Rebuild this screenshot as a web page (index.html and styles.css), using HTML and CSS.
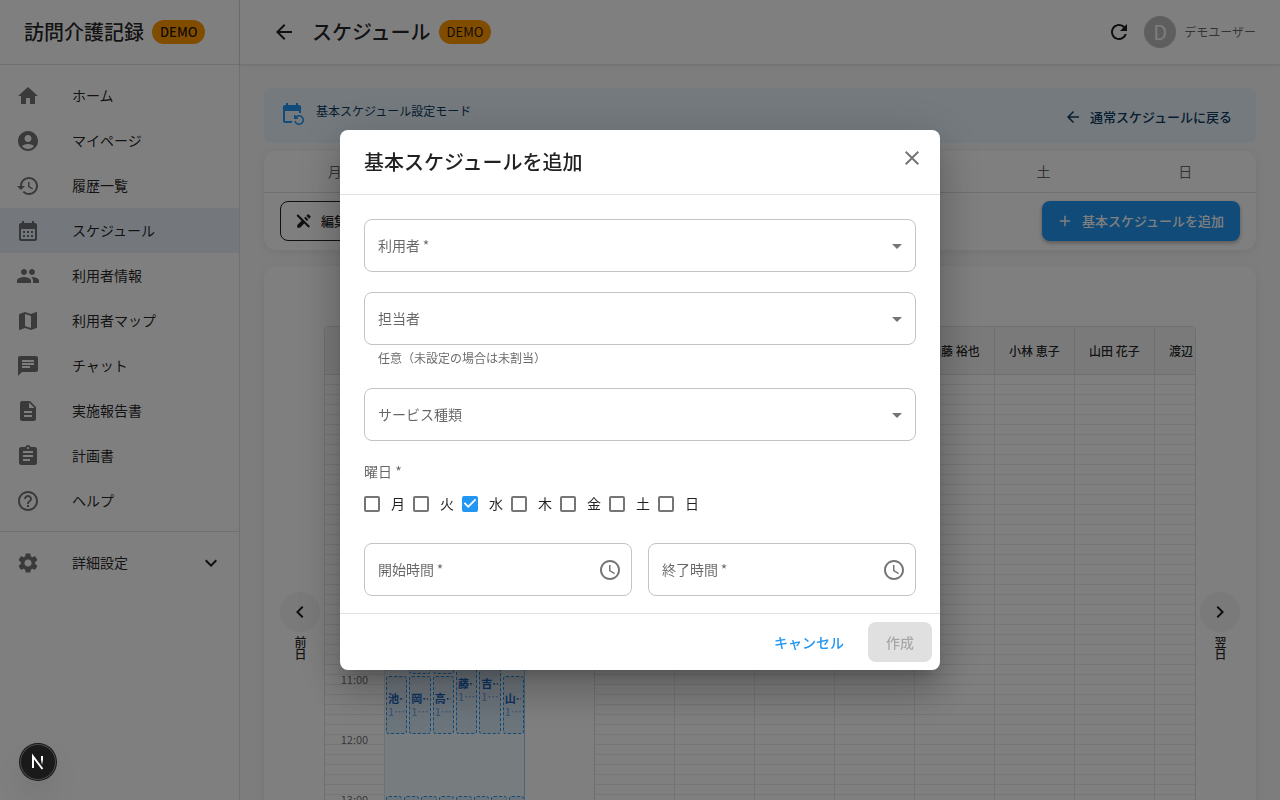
FILE: index.html
```html
<!DOCTYPE html>
<html lang="ja">
<head>
<meta charset="utf-8">
<meta name="viewport" content="width=device-width, initial-scale=1">
<title>スケジュール | 訪問介護記録</title>
<link rel="stylesheet" href="styles.css">
</head>
<body>
<div class="app">
  <aside class="sidebar">
    <div class="brand"><span class="brand-name">訪問介護記録</span><span class="chip chip-bold">DEMO</span></div>
    <nav class="nav">
      <a class="nav-item" href="#"><svg class="icon" viewBox="0 0 24 24"><path d="M10 20v-6h4v6h5v-8h3L12 3 2 12h3v8z"/></svg>ホーム</a>
      <a class="nav-item" href="#"><svg class="icon" viewBox="0 0 24 24"><path d="M12 2C6.480 2 2 6.480 2 12s4.480 10 10 10 10-4.480 10-10S17.520 2 12 2m0 4c1.930 0 3.500 1.570 3.500 3.500S13.930 13 12 13s-3.500-1.570-3.500-3.500S10.070 6 12 6m0 14c-2.030 0-4.430-.82-6.140-2.880C7.550 15.800 9.680 15 12 15s4.450.8 6.140 2.120C16.430 19.180 14.030 20 12 20"/></svg>マイページ</a>
      <a class="nav-item" href="#"><svg class="icon" viewBox="0 0 24 24"><path d="M13 3c-4.970 0-9 4.030-9 9H1l3.890 3.890.07.14L9 12H6c0-3.870 3.130-7 7-7s7 3.130 7 7-3.130 7-7 7c-1.930 0-3.680-.79-4.940-2.060l-1.420 1.420C8.270 19.990 10.510 21 13 21c4.970 0 9-4.030 9-9s-4.030-9-9-9m-1 5v5l4.280 2.540.72-1.210-3.500-2.080V8z"/></svg>履歴一覧</a>
      <a class="nav-item nav-item-active" href="#" aria-current="page"><svg class="icon" viewBox="0 0 24 24"><path d="M19 4h-1V2h-2v2H8V2H6v2H5c-1.110 0-1.990.9-1.990 2L3 20c0 1.100.89 2 2 2h14c1.100 0 2-.9 2-2V6c0-1.100-.9-2-2-2m0 16H5V10h14zM9 14H7v-2h2zm4 0h-2v-2h2zm4 0h-2v-2h2zm-8 4H7v-2h2zm4 0h-2v-2h2zm4 0h-2v-2h2z"/></svg>スケジュール</a>
      <a class="nav-item" href="#"><svg class="icon" viewBox="0 0 24 24"><path d="M16 11c1.660 0 2.990-1.340 2.990-3S17.660 5 16 5s-3 1.340-3 3 1.340 3 3 3m-8 0c1.660 0 2.990-1.340 2.990-3S9.660 5 8 5 5 6.340 5 8s1.340 3 3 3m0 2c-2.330 0-7 1.170-7 3.500V19h14v-2.500c0-2.330-4.670-3.500-7-3.500m8 0c-.29 0-.62.02-.97.05 1.160.84 1.970 1.970 1.970 3.450V19h6v-2.500c0-2.330-4.670-3.500-7-3.500"/></svg>利用者情報</a>
      <a class="nav-item" href="#"><svg class="icon" viewBox="0 0 24 24"><path d="m20.500 3-.16.03L15 5.100 9 3 3.360 4.900c-.21.07-.36.25-.36.48V20.500c0 .28.22.5.5.5l.16-.03L9 18.900l6 2.100 5.640-1.900c.21-.07.36-.25.36-.48V3.500c0-.28-.22-.5-.5-.5M15 19l-6-2.110V5l6 2.110z"/></svg>利用者マップ</a>
      <a class="nav-item" href="#"><svg class="icon" viewBox="0 0 24 24"><path d="M20 2H4c-1.100 0-1.990.9-1.990 2L2 22l4-4h14c1.100 0 2-.9 2-2V4c0-1.100-.9-2-2-2M6 9h12v2H6zm8 5H6v-2h8zm4-6H6V6h12z"/></svg>チャット</a>
      <a class="nav-item" href="#"><svg class="icon" viewBox="0 0 24 24"><path d="M14 2H6c-1.100 0-1.990.9-1.990 2L4 20c0 1.100.89 2 1.990 2H18c1.100 0 2-.9 2-2V8zm2 16H8v-2h8zm0-4H8v-2h8zm-3-5V3.500L18.500 9z"/></svg>実施報告書</a>
      <a class="nav-item" href="#"><svg class="icon" viewBox="0 0 24 24"><path d="M19 3h-4.180C14.400 1.840 13.300 1 12 1c-1.300 0-2.400.84-2.820 2H5c-1.100 0-2 .9-2 2v14c0 1.100.9 2 2 2h14c1.100 0 2-.9 2-2V5c0-1.100-.9-2-2-2m-7 0c.55 0 1 .45 1 1s-.45 1-1 1-1-.45-1-1 .45-1 1-1m2 14H7v-2h7zm3-4H7v-2h10zm0-4H7V7h10z"/></svg>計画書</a>
      <a class="nav-item" href="#"><svg class="icon" viewBox="0 0 24 24"><path d="M11 18h2v-2h-2zm1-16C6.480 2 2 6.480 2 12s4.480 10 10 10 10-4.480 10-10S17.520 2 12 2m0 18c-4.410 0-8-3.590-8-8s3.590-8 8-8 8 3.590 8 8-3.590 8-8 8m0-14c-2.210 0-4 1.790-4 4h2c0-1.100.9-2 2-2s2 .9 2 2c0 2-3 1.750-3 5h2c0-2.250 3-2.500 3-5 0-2.210-1.790-4-4-4"/></svg>ヘルプ</a>
    </nav>
    <div class="nav nav-bottom">
      <button class="nav-item" type="button" aria-expanded="false"><svg class="icon" viewBox="0 0 24 24"><path d="M19.140 12.940c.04-.3.06-.61.06-.94 0-.32-.02-.64-.07-.94l2.030-1.580c.18-.14.23-.41.12-.61l-1.920-3.320c-.12-.22-.37-.29-.59-.22l-2.390.96c-.5-.38-1.030-.7-1.620-.94l-.36-2.540c-.04-.24-.24-.41-.48-.41h-3.840c-.24 0-.43.17-.47.41l-.36 2.540c-.59.24-1.130.57-1.620.94l-2.390-.96c-.22-.08-.47 0-.59.22L2.740 8.870c-.12.21-.08.47.12.61l2.030 1.580c-.05.3-.09.63-.09.94s.02.64.07.94l-2.030 1.580c-.18.14-.23.41-.12.61l1.920 3.320c.12.22.37.29.59.22l2.390-.96c.5.38 1.030.7 1.620.94l.36 2.540c.05.24.24.41.48.41h3.840c.24 0 .44-.17.47-.41l.36-2.540c.59-.24 1.130-.56 1.620-.94l2.390.96c.22.08.47 0 .59-.22l1.920-3.320c.12-.22.07-.47-.12-.61zM12 15.600c-1.980 0-3.600-1.620-3.600-3.600s1.620-3.600 3.600-3.600 3.600 1.620 3.600 3.600-1.620 3.600-3.600 3.600"/></svg>詳細設定<svg class="icon nav-expand" viewBox="0 0 24 24"><path d="M16.590 8.590 12 13.170 7.410 8.590 6 10l6 6 6-6z"/></svg></button>
    </div>
  </aside>

  <div class="page">
    <header class="topbar">
      <button class="icon-button" type="button" aria-label="戻る"><svg class="icon" viewBox="0 0 24 24"><path d="M20 11H7.830l5.590-5.590L12 4l-8 8 8 8 1.410-1.410L7.830 13H20z"/></svg></button>
      <h1 class="page-title">スケジュール</h1>
      <span class="chip">DEMO</span>
      <div class="user">
        <button class="icon-button" type="button" aria-label="更新"><svg class="icon" viewBox="0 0 24 24"><path d="M17.650 6.350C16.200 4.900 14.210 4 12 4c-4.420 0-7.990 3.580-7.990 8s3.570 8 7.990 8c3.730 0 6.840-2.550 7.730-6h-2.080c-.82 2.330-3.040 4-5.650 4-3.310 0-6-2.690-6-6s2.690-6 6-6c1.660 0 3.140.69 4.220 1.780L13 11h7V4z"/></svg></button>
        <span class="avatar">D</span>
        <span class="user-name">デモユーザー</span>
      </div>
    </header>

    <main class="content">
      <section class="banner">
        <svg class="icon banner-icon" viewBox="0 0 24 24"><path d="M21 12V6c0-1.100-.9-2-2-2h-1V2h-2v2H8V2H6v2H5c-1.110 0-1.990.9-1.990 2L3 20c0 1.100.89 2 2 2h7v-2H5V10h14v2zm-5.360 8c.43 1.450 1.770 2.500 3.360 2.500 1.930 0 3.500-1.570 3.500-3.500s-1.570-3.500-3.500-3.500c-.95 0-1.820.38-2.450 1H18V18h-4v-4h1.500v1.430c.9-.88 2.140-1.430 3.500-1.430 2.760 0 5 2.240 5 5s-2.240 5-5 5c-2.420 0-4.440-1.720-4.900-4z"/></svg>
        <p class="banner-text">基本スケジュール設定モード</p>
        <button class="button button-text banner-action" type="button"><svg class="icon icon-small" viewBox="0 0 24 24"><path d="M20 11H7.830l5.590-5.590L12 4l-8 8 8 8 1.410-1.410L7.830 13H20z"/></svg>通常スケジュールに戻る</button>
      </section>

      <section class="card">
        <div class="days"><button class="day" type="button">月</button><button class="day" type="button">火</button><button class="day" type="button">水</button><button class="day" type="button">木</button><button class="day" type="button">金</button><button class="day" type="button">土</button><button class="day" type="button">日</button></div>
        <div class="toolbar">
          <button class="button button-outlined" type="button"><svg class="icon icon-small" viewBox="0 0 24 24"><path d="m12.126 8.125 1.937-1.937 3.747 3.747-1.937 1.938zM20.710 5.630l-2.340-2.340c-.39-.39-1.020-.39-1.410 0L15.130 5.120l3.750 3.750 1.830-1.830c.39-.39.39-1.020 0-1.410zM2 5l6.630 6.630L3 17.250V21h3.750l5.630-5.620L18 21l2-2L4 3z"/></svg>編集</button>
          <button class="button button-primary" type="button"><svg class="icon icon-small" viewBox="0 0 24 24"><path d="M19 13h-6v6h-2v-6H5v-2h6V5h2v6h6z"/></svg>基本スケジュールを追加</button>
        </div>
      </section>

      <section class="card board">
        <div class="pager"><button class="pager-button" type="button" aria-label="前日へ"><svg class="icon" viewBox="0 0 24 24"><path d="M15.410 7.410 14 6l-6 6 6 6 1.410-1.410L10.830 12z"/></svg></button><span class="pager-label">前日</span></div>
        <div class="timetable">
          <div class="head"></div>
          <div class="head"></div>
          <div class="head"></div>
          <div class="head"></div><div class="head"></div><div class="head"></div><div class="head"></div>
          <div class="head">加藤 裕也</div><div class="head">小林 恵子</div><div class="head">山田 花子</div><div class="head">渡辺</div>
          <div class="hours ruled">
            <span>6:00</span><span>7:00</span><span>8:00</span><span>9:00</span><span>10:00</span><span>11:00</span><span>12:00</span><span>13:00</span><span>14:00</span>
          </div>
          <div class="lane">
            <div class="events events-morning">
              <div class="event event-half"></div>
              <div class="event event-half"></div>
              <div class="event event-hour"><b>池…</b><span>1…</span></div>
              <div class="event event-hour"><b>岡…</b><span>1…</span></div>
              <div class="event event-hour"><b>高…</b><span>1…</span></div>
              <div class="event event-long"><b>藤…</b><span>1…</span></div>
              <div class="event event-long"><b>吉…</b><span>1…</span></div>
              <div class="event event-hour"><b>山…</b><span>1…</span></div>
            </div>
            <div class="events events-afternoon">
              <div class="event"></div><div class="event"></div><div class="event"></div><div class="event"></div><div class="event"></div><div class="event"></div><div class="event"></div><div class="event"></div>
            </div>
          </div>
          <div class="gap"></div>
          <div class="ruled"></div><div class="ruled"></div><div class="ruled"></div><div class="ruled"></div><div class="ruled"></div><div class="ruled"></div><div class="ruled"></div><div class="ruled"></div>
        </div>
        <div class="pager"><button class="pager-button" type="button" aria-label="翌日へ"><svg class="icon" viewBox="0 0 24 24"><path d="M10 6 8.590 7.410 13.170 12l-4.580 4.590L10 18l6-6z"/></svg></button><span class="pager-label">翌日</span></div>
      </section>
    </main>
  </div>
</div>

<div class="backdrop">
  <form class="dialog" role="dialog" aria-modal="true" aria-labelledby="dialog-title">
    <header class="dialog-head">
      <h2 class="dialog-title" id="dialog-title">基本スケジュールを追加</h2>
      <button class="icon-button dialog-close" type="button" aria-label="閉じる"><svg class="icon" viewBox="0 0 24 24"><path d="M19 6.410 17.590 5 12 10.590 6.410 5 5 6.410 10.590 12 5 17.590 6.410 19 12 13.410 17.590 19 19 17.590 13.410 12z"/></svg></button>
    </header>
    <div class="dialog-body">
      <div class="field">
        <select class="control" id="client"><option value=""></option></select>
        <label class="field-label" for="client">利用者&thinsp;*</label>
        <svg class="icon field-icon" viewBox="0 0 24 24"><path d="m7 10 5 5 5-5z"/></svg>
      </div>
      <div class="field-group">
        <div class="field">
          <select class="control" id="staff" aria-describedby="staff-help"><option value=""></option></select>
          <label class="field-label" for="staff">担当者</label>
          <svg class="icon field-icon" viewBox="0 0 24 24"><path d="m7 10 5 5 5-5z"/></svg>
        </div>
        <p class="help" id="staff-help">任意（未設定の場合は未割当）</p>
      </div>
      <div class="field">
        <select class="control" id="service"><option value=""></option></select>
        <label class="field-label" for="service">サービス種類</label>
        <svg class="icon field-icon" viewBox="0 0 24 24"><path d="m7 10 5 5 5-5z"/></svg>
      </div>
      <fieldset class="weekdays">
        <legend class="weekdays-title">曜日 *</legend>
        <div class="weekdays-list">
          <label class="check"><input type="checkbox">月</label>
          <label class="check"><input type="checkbox">火</label>
          <label class="check"><input type="checkbox" checked>水</label>
          <label class="check"><input type="checkbox">木</label>
          <label class="check"><input type="checkbox">金</label>
          <label class="check"><input type="checkbox">土</label>
          <label class="check"><input type="checkbox">日</label>
        </div>
      </fieldset>
      <div class="times">
        <div class="field">
          <input class="control" type="text" id="start">
          <label class="field-label" for="start">開始時間&thinsp;*</label>
          <button class="icon-button field-button" type="button" aria-label="開始時間を選択"><svg class="icon" viewBox="0 0 24 24"><path d="M11.990 2C6.470 2 2 6.480 2 12s4.470 10 9.990 10C17.520 22 22 17.520 22 12S17.520 2 11.990 2M12 20c-4.420 0-8-3.580-8-8s3.580-8 8-8 8 3.580 8 8-3.580 8-8 8"/><path d="M12.500 7H11v6l5.250 3.150.75-1.230-4.500-2.670z"/></svg></button>
        </div>
        <div class="field">
          <input class="control" type="text" id="end">
          <label class="field-label" for="end">終了時間&thinsp;*</label>
          <button class="icon-button field-button" type="button" aria-label="終了時間を選択"><svg class="icon" viewBox="0 0 24 24"><path d="M11.990 2C6.470 2 2 6.480 2 12s4.470 10 9.990 10C17.520 22 22 17.520 22 12S17.520 2 11.990 2M12 20c-4.420 0-8-3.580-8-8s3.580-8 8-8 8 3.580 8 8-3.580 8-8 8"/><path d="M12.500 7H11v6l5.250 3.150.75-1.230-4.500-2.670z"/></svg></button>
        </div>
      </div>
    </div>
    <footer class="dialog-actions">
      <button class="button button-text button-link" type="button">キャンセル</button>
      <button class="button button-submit" type="submit" disabled>作成</button>
    </footer>
  </form>
</div>

<button class="dev-badge" type="button" aria-label="開発ツール">
  <svg viewBox="0 0 20 20" width="20" height="20" fill="none" stroke-width="2">
    <defs><linearGradient id="fade" x1="0" y1="0" x2="0" y2="1"><stop offset="0.4" stop-color="#fff"/><stop offset="1" stop-color="#fff" stop-opacity="0"/></linearGradient></defs>
    <path stroke="#fff" d="M5 16V4.500L14.500 17"/>
    <rect x="13" y="4" width="2" height="9" fill="url(#fade)"/>
  </svg>
</button>
</body>
</html>
```
FILE: styles.css
```css
* {
  box-sizing: border-box;
}

body {
  margin: 0;
  overflow: hidden;
  background: #fafafa;
  color: rgba(0, 0, 0, 0.87);
  font-family: "Noto Sans CJK JP", sans-serif;
  font-size: 14px;
  line-height: 20px;
}

button {
  margin: 0;
  padding: 0;
  border: 0;
  background: none;
  color: inherit;
  font: inherit;
}

h1,
h2,
p {
  margin: 0;
}

.icon {
  flex: none;
  width: 24px;
  height: 24px;
  fill: currentColor;
}

.icon-small {
  width: 18px;
  height: 18px;
}

.icon-button {
  display: flex;
  padding: 8px;
  border-radius: 50%;
}

.app {
  display: flex;
  height: 100vh;
}

/* Sidebar */

.sidebar {
  flex: none;
  width: 240px;
  border-right: 1px solid #e0e0e0;
  background: #fff;
}

.brand {
  display: flex;
  align-items: center;
  gap: 8px;
  height: 65px;
  padding: 0 24px;
  border-bottom: 1px solid #e0e0e0;
}

.brand-name {
  font-size: 20px;
  font-weight: 500;
}

.chip {
  padding: 0 8px;
  border-radius: 12px;
  background: #ff9800;
  font-size: 13px;
  line-height: 24px;
}

.chip-bold {
  font-weight: 500;
}

.nav {
  padding: 8px 0;
}

.nav-bottom {
  border-top: 1px solid #e0e0e0;
}

.nav-item {
  display: flex;
  align-items: center;
  gap: 32px;
  width: 100%;
  height: 45px;
  padding: 0 16px;
  color: inherit;
  line-height: 21px;
  text-decoration: none;
}

.nav-item .icon {
  color: rgba(0, 0, 0, 0.54);
}

.nav-item .nav-expand {
  margin-left: auto;
  color: inherit;
}

.nav-item-active {
  background: #e9f1fb;
}

/* Top bar */

.page {
  display: flex;
  flex: 1;
  flex-direction: column;
  min-width: 0;
}

.topbar {
  display: flex;
  flex: none;
  align-items: center;
  gap: 8px;
  height: 64px;
  padding: 0 24px;
  background: #fff;
  box-shadow: 0 1px 3px rgba(0, 0, 0, 0.12);
}

.page-title {
  font-size: 20px;
  font-weight: 500;
}

.user {
  display: flex;
  align-items: center;
  gap: 8px;
  margin-left: auto;
}

.user .icon-button {
  padding: 5px;
}

.avatar {
  width: 32px;
  height: 32px;
  border-radius: 50%;
  background: #bdbdbd;
  color: #fafafa;
  font-size: 20px;
  line-height: 32px;
  text-align: center;
}

.user-name {
  color: rgba(0, 0, 0, 0.6);
  font-size: 12px;
}

/* Page content */

.content {
  flex: 1;
  min-height: 0;
  padding: 24px;
  overflow: hidden;
}

.banner {
  display: flex;
  align-items: flex-start;
  gap: 12px;
  min-height: 55px;
  margin-bottom: 8px;
  padding: 6px 16px;
  border-radius: 8px;
  background: #e9f4fc;
  color: #0d3c61;
}

.banner-icon {
  margin-top: 7px;
  color: #2196f3;
}

.banner-text {
  padding: 8px 0;
  font-size: 12px;
  line-height: 18px;
}

.banner-action {
  margin: 4px 0 0 auto;
}

.card {
  margin-bottom: 16px;
  border-radius: 12px;
  background: #fff;
  box-shadow: 0 2px 8px rgba(0, 0, 0, 0.08);
}

.days {
  display: grid;
  grid-template-columns: repeat(7, 1fr);
  border-bottom: 1px solid #e0e0e0;
}

.day {
  height: 41px;
  color: rgba(0, 0, 0, 0.6);
  line-height: 21px;
}

.toolbar {
  display: flex;
  justify-content: space-between;
  padding: 8px 16px 9px;
}

.button {
  display: flex;
  align-items: center;
  justify-content: center;
  gap: 8px;
  height: 40px;
  padding: 0 16px;
  border-radius: 8px;
  font-size: 13px;
  font-weight: 500;
}

.button-text {
  height: 38px;
  padding: 0 8px;
}

.button-outlined {
  padding: 0 14px;
  border: 1px solid rgba(0, 0, 0, 0.87);
}

.button-primary {
  padding-left: 14px;
  background: #2196f3;
  color: #fff;
  box-shadow: 0 2px 4px rgba(0, 0, 0, 0.3);
}

/* Timetable */

.board {
  display: flex;
  gap: 4px;
  padding: 60px 16px 16px;
}

.pager {
  display: flex;
  flex: none;
  flex-direction: column;
  align-items: center;
  justify-content: center;
  gap: 4px;
  width: 40px;
}

.pager-button {
  padding: 8px;
  width: 40px;
  height: 40px;
  border-radius: 50%;
  background: #f5f5f5;
}

.pager-label {
  font-size: 12px;
  font-weight: 500;
  writing-mode: vertical-rl;
}

.timetable {
  display: grid;
  flex: 1;
  grid-template-columns: 60px 140px 70px repeat(8, 80px);
  grid-template-rows: 48px 1fr;
  height: 600px;
  min-width: 0;
  overflow: hidden;
  border: 1px solid #e0e0e0;
  border-radius: 4px;
}

.head {
  padding: 0 14px;
  border-right: 1px solid #e0e0e0;
  border-bottom: 1px solid #e0e0e0;
  background: #f5f5f5;
  font-size: 12px;
  font-weight: 500;
  line-height: 48px;
  white-space: nowrap;
}

.ruled {
  border-right: 1px solid #e8e8e8;
  background: repeating-linear-gradient(transparent 0 9px, #ececec 9px 10px);
}

.hours {
  overflow: hidden;
  border-right-color: #e0e0e0;
  color: rgba(0, 0, 0, 0.6);
  font-size: 11px;
  line-height: 8px;
  text-align: center;
}

.hours span {
  display: block;
  height: 60px;
}

.lane {
  display: grid;
  grid-template-rows: repeat(60, 10px);
  min-height: 0;
  overflow: hidden;
  border-right: 1px solid #90caf9;
  background: #eff8ff;
}

.gap {
  border-right: 1px solid #e0e0e0;
}

.events {
  display: grid;
  column-gap: 2px;
  padding: 0 0 0 1px;
}

.events-morning {
  grid-row: 28 / 37;
  grid-template-rows: repeat(9, 10px);
  grid-template-columns: repeat(6, 1fr);
}

.events-afternoon {
  grid-row: 43 / 49;
  grid-template-columns: repeat(8, 1fr);
}

.event {
  display: flex;
  flex-direction: column;
  justify-content: center;
  min-width: 0;
  margin: 1px 0;
  padding: 0 2px 0 1px;
  overflow: hidden;
  border: 1px dashed #2196f3;
  border-radius: 3px;
  background: #d9e9f8;
  color: #1565c0;
  font-size: 11px;
  line-height: 13px;
  white-space: nowrap;
}

.event b {
  overflow: hidden;
}

.event span {
  color: #64a8e4;
}

.event-half {
  grid-row: 1 / 4;
}

.event-half:first-child {
  grid-column: 2;
}

.event-half:nth-child(2) {
  grid-column: 3;
}

.event-hour {
  grid-row: 4 / 10;
}

.event-long {
  grid-row: 1 / 10;
}

/* Dialog */

.backdrop {
  position: fixed;
  inset: 0;
  display: flex;
  align-items: center;
  justify-content: center;
  background: rgba(0, 0, 0, 0.5);
}

.dialog {
  width: 600px;
  max-width: calc(100% - 64px);
  border-radius: 8px;
  background: #fff;
  box-shadow: 0 11px 15px -7px rgba(0, 0, 0, 0.2), 0 24px 38px 3px rgba(0, 0, 0, 0.14), 0 9px 46px 8px rgba(0, 0, 0, 0.12);
}

.dialog-head {
  display: flex;
  align-items: flex-start;
  justify-content: space-between;
  padding: 8px 8px 8px 24px;
}

.dialog-title {
  padding: 8px 0;
  font-size: 20px;
  font-weight: 500;
  line-height: 32px;
}

.dialog-close {
  color: rgba(0, 0, 0, 0.54);
}

.dialog-body {
  display: flex;
  flex-direction: column;
  gap: 20px;
  padding: 24px 24px 17px;
  border-top: 1px solid #e0e0e0;
  border-bottom: 1px solid #e0e0e0;
}

.field {
  display: grid;
  align-items: center;
}

.field > * {
  grid-area: 1 / 1;
}

.control {
  appearance: none;
  width: 100%;
  height: 53px;
  margin: 0;
  padding: 0 40px 0 13px;
  border: 1px solid #c4c4c4;
  border-radius: 8px;
  background: #fff;
  color: inherit;
  font: inherit;
}

.field-label {
  justify-self: start;
  padding-left: 14px;
  color: rgba(0, 0, 0, 0.6);
  line-height: 21px;
  pointer-events: none;
}

.field-icon {
  justify-self: end;
  margin-right: 7px;
  color: rgba(0, 0, 0, 0.54);
  pointer-events: none;
}

.field-button {
  justify-self: end;
  margin-right: 2px;
  color: rgba(0, 0, 0, 0.54);
}

.help {
  padding: 3px 14px 0;
  color: rgba(0, 0, 0, 0.6);
  font-size: 12px;
}

.weekdays {
  min-width: 0;
  margin: 0;
  padding: 0;
  border: 0;
}

.weekdays-title {
  padding: 0;
  color: rgba(0, 0, 0, 0.6);
}

.weekdays-list {
  display: flex;
  gap: 8px;
  padding: 12px 0 9px;
}

.check {
  display: flex;
  align-items: center;
  gap: 11px;
  line-height: 21px;
}

.check input {
  appearance: none;
  width: 16px;
  height: 16px;
  margin: 0;
  border: 2px solid #757575;
  border-radius: 2px;
}

.check input:checked {
  border: 0;
  background: #2196f3;
}

.check input:checked::before {
  display: block;
  height: 16px;
  background: #fff;
  clip-path: polygon(39% 78%, 11% 50%, 19% 42%, 39% 62%, 81% 20%, 89% 28%);
  content: "";
}

.times {
  display: grid;
  grid-template-columns: 1fr 1fr;
  gap: 16px;
}

.dialog-actions {
  display: flex;
  justify-content: flex-end;
  gap: 16px;
  padding: 8px;
}

.button-link {
  height: 40px;
  color: #2196f3;
  font-size: 14px;
}

.button-submit {
  padding: 0 18px;
  background: #e0e0e0;
  color: rgba(0, 0, 0, 0.26);
  font-size: 14px;
}

.dev-badge {
  position: fixed;
  bottom: 20px;
  left: 20px;
  display: flex;
  align-items: center;
  justify-content: center;
  width: 36px;
  height: 36px;
  border-radius: 50%;
  background: #1a1a1a;
  box-shadow: inset 0 0 0 1px #4a4a4a, 0 0 0 1px #171717, 0 16px 32px -8px rgba(0, 0, 0, 0.24);
}
```
